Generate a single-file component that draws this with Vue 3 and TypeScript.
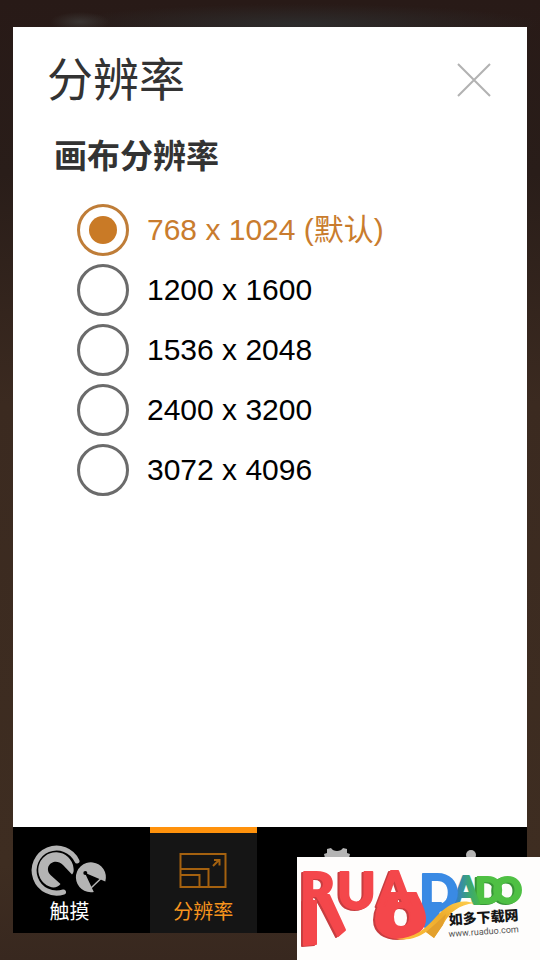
<script setup lang="ts">
import { ref } from 'vue'

interface Resolution {
  value: string
  label: string
}

const resolutions: Resolution[] = [
  { value: '768x1024', label: '768 x 1024 (默认)' },
  { value: '1200x1600', label: '1200 x 1600' },
  { value: '1536x2048', label: '1536 x 2048' },
  { value: '2400x3200', label: '2400 x 3200' },
  { value: '3072x4096', label: '3072 x 4096' },
]

const selected = ref('768x1024')
const open = ref(true)
</script>

<template>
  <div class="page">
    <main v-if="open" class="panel">
      <header class="panel-head">
        <h1>分辨率</h1>
        <button class="close" type="button" @click="open = false">
          <svg viewBox="0 0 36 36" width="36" height="36">
            <path d="M2 2 34 34M34 2 2 34" />
          </svg>
        </button>
      </header>
      <fieldset class="group">
        <legend>画布分辨率</legend>
        <label v-for="r in resolutions" :key="r.value" class="option">
          <input v-model="selected" type="radio" name="resolution" :value="r.value" />
          <span>{{ r.label }}</span>
        </label>
      </fieldset>
    </main>

    <nav class="tabs">
      <button class="tab" type="button">
        <svg class="icon" viewBox="0 0 76 52">
          <path
            d="M45 17A22.500 22.500 0 1 0 31.500 48"
            fill="none" stroke="#b4b4b4" stroke-width="5" stroke-linecap="round"
          />
          <path
            d="M40 30.500C41.500 29 42 27 41.500 24A17.700 17.700 0 1 0 17.500 42.500C22 44.500 26 43 28.500 40L18.500 31C11 23 22 12.500 31 21Z"
            fill="#b4b4b4"
          />
          <path
            d="M52.800 28.700 61.800 48A15 15 0 1 1 73.300 37.500Z"
            fill="#b4b4b4"
          />
          <circle cx="53.300" cy="29" r="2" fill="#000" />
          <path d="M59 44 69 34.500" stroke="#b4b4b4" stroke-width="1.500" />
        </svg>
        <span>触摸</span>
      </button>
      <button class="tab active" type="button">
        <svg class="icon" viewBox="0 0 76 52">
          <g fill="none" stroke="#a4610f" stroke-width="2">
            <path d="M15.500 10H60.500V43H15.500ZM15.500 25H43.500V43M15.500 31H34.500V43" />
            <path d="M48 22 54 16M49 16H54.500V21.500" />
          </g>
        </svg>
        <span>分辨率</span>
      </button>
      <button class="tab" type="button">
        <svg class="icon" viewBox="0 0 76 52">
          <path
            d="M28 5 32 4C34 8 42 8 44 4L48 5 48 9 51 10 50 14V42H26V14L25 10 28 9Z"
            fill="#b4b4b4"
          />
        </svg>
      </button>
      <button class="tab" type="button">
        <svg class="icon" viewBox="0 0 76 52">
          <circle cx="39" cy="11" r="5" fill="#b4b4b4" />
          <rect x="35" y="18" width="8" height="26" rx="2" fill="#b4b4b4" />
        </svg>
      </button>
    </nav>

    <aside class="stamp">
      <svg viewBox="0 0 243 103" width="243" height="103">
        <defs>
          <linearGradient id="sea" x1="0" x2="1" y1="0" y2="0">
            <stop offset="0.1" stop-color="#3478cc" />
            <stop offset="0.6" stop-color="#3ba576" />
            <stop offset="1" stop-color="#48b84a" />
          </linearGradient>
          <linearGradient id="gold" x1="0" x2="1" y1="1" y2="0">
            <stop offset="0" stop-color="#ffc13d" />
            <stop offset="0.6" stop-color="#edac2c" />
            <stop offset="1" stop-color="#ffcf4e" />
          </linearGradient>
        </defs>
        <g class="letters">
          <g class="green">
            <text x="196" y="46" font-size="36">O</text>
            <text x="178" y="46" font-size="36">D</text>
          </g>
          <text class="sea" x="156" y="47" font-size="37">A</text>
          <path class="blue-base" d="M128 46H144L139 66L131 70H128Z" />
          <text class="blue" x="122" y="54" font-size="52">D</text>
          <g class="red">
            <path d="M7 44H19V87L7 88Z" />
            <path d="M20 38H32L48 73L41 79Z" />
            <text x="3" y="54" font-size="54">R</text>
            <text x="40" y="52" font-size="52">U</text>
            <path
              d="M89 36C84 44 79 52 79 62C79 75 90 81 103 81C118 81 129 72 128 60C127 50 122 44 119 36H108V46H100V36ZM104 50C110 50 113 54 113 60C113 66 110 70 104 70C98 70 96 66 96 60C96 54 98 50 104 50Z"
              fill-rule="evenodd"
            />
            <text x="81" y="49" font-size="47">A</text>
          </g>
        </g>
        <path
          d="M99 82C118 81 128 72 138 61C149 48 162 41 177 46C162 48 153 55 147 66L137 81L129 75C121 80 113 84 99 82Z"
          fill="url(#gold)"
        />
        <path d="M137 81 129 75C136 69 143 63 149 57L146 68Z" fill="#e3a02c" />
        <g transform="rotate(-4 152 68)">
          <text class="site-name" x="152" y="68">如多下载网</text>
          <text class="site-url" x="151" y="80">www.ruaduo.com</text>
        </g>
      </svg>
    </aside>
  </div>
</template>

<style>
body {
  margin: 0;
}
</style>

<style scoped>
.page {
  position: relative;
  box-sizing: border-box;
  display: flex;
  flex-direction: column;
  min-height: 100vh;
  padding: 27px 13px;
  font-family: "Liberation Sans", "Noto Sans CJK SC", sans-serif;
  background:
    radial-gradient(ellipse 30px 10px at 80px 22px, #393432, transparent),
    radial-gradient(ellipse 240px 20px at 300px 24px, #2d2c2c, transparent),
    linear-gradient(#281a17, #291d19 18%, #3b2a20 42%, #3e2d21 90%, #38281f);
}

.panel {
  flex: 1;
  background: #fff;
}

.panel-head {
  display: flex;
  align-items: center;
  justify-content: space-between;
  padding: 21px 35px 0 34px;
}

h1 {
  margin: 0;
  color: #333;
  font-size: 46px;
  font-weight: 400;
  line-height: 64px;
}

.close {
  display: flex;
  padding: 0;
  border: 0;
  background: none;
  cursor: pointer;
}

.close path {
  fill: none;
  stroke: #b2b2b2;
  stroke-width: 2;
}

.group {
  display: flex;
  flex-direction: column;
  gap: 8px;
  margin: 0;
  padding: 23px 20px 0 64px;
  border: 0;
}

legend {
  margin-left: -23px;
  padding: 21px 0 0;
  color: #333;
  font-size: 33px;
  font-weight: 700;
  line-height: 48px;
}

.option {
  display: flex;
  align-items: center;
  gap: 18px;
  color: #000;
  font-size: 30px;
  line-height: 52px;
  cursor: pointer;
}

.option:has(input:checked) {
  color: #c97c2e;
}

.option input {
  appearance: none;
  display: grid;
  place-items: center;
  box-sizing: border-box;
  width: 52px;
  height: 52px;
  margin: 0;
  border: 3px solid #6b6b6b;
  border-radius: 50%;
  background: #fff;
}

.option input:checked {
  border-color: #bf7d38;
}

.option input:checked::before {
  content: "";
  width: 28px;
  height: 28px;
  border-radius: 50%;
  background: #c97a26;
}

.tabs {
  display: flex;
  justify-content: space-between;
  height: 106px;
  padding: 0 3px;
  background: #000;
}

.tab {
  display: flex;
  flex-direction: column;
  align-items: center;
  gap: 2px;
  box-sizing: border-box;
  width: 107px;
  padding: 11px 0 0;
  border: 0;
  border-top: 6px solid transparent;
  background: none;
  color: #fff;
  font-family: inherit;
  font-size: 20px;
  line-height: 28px;
  cursor: pointer;
}

.tab.active {
  border-top-color: #ff920c;
  background: #151515;
  background-clip: padding-box;
  color: #f7941d;
}

.icon {
  width: 76px;
  height: 52px;
  overflow: visible;
}

.stamp {
  position: absolute;
  right: 0;
  bottom: 0;
  display: flex;
  background: #fefdfc;
}

.letters {
  font-family: Lato, "Open Sans", sans-serif;
  font-weight: 900;
  stroke-width: 2;
  stroke-linejoin: round;
}

.red {
  fill: #f4474b;
  stroke: #f4474b;
  filter: drop-shadow(-2px 1px 0 #c83d40);
}

.blue,
.blue-base {
  fill: #3a8ae4;
  stroke: #3a8ae4;
}

.sea {
  fill: url(#sea);
  stroke: url(#sea);
}

.green {
  fill: #4fc044;
  stroke: #4fc044;
  filter: drop-shadow(-2px 1px 0 #389537);
}

.site-name {
  fill: #151515;
  font-size: 14px;
  font-weight: 900;
}

.site-url {
  fill: #555;
  font-family: Roboto, sans-serif;
  font-size: 9px;
}
</style>
